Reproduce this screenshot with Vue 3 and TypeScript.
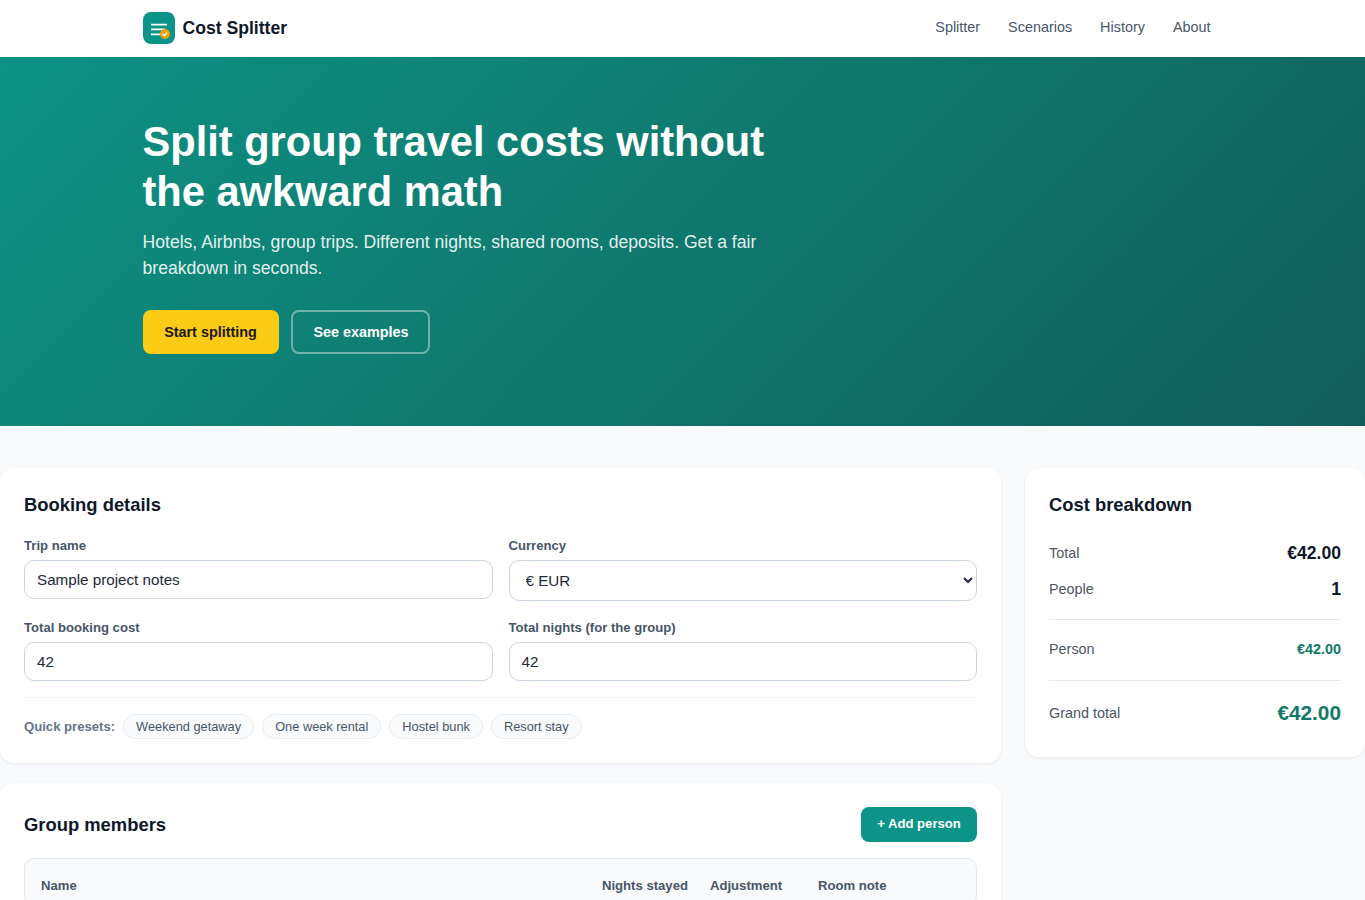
<script setup lang="ts">
import { ref } from 'vue'

const navLinks = ['Splitter', 'Scenarios', 'History', 'About']
const presets = ['Weekend getaway', 'One week rental', 'Hostel bunk', 'Resort stay']

const tripName = ref('Sample project notes')
const currency = ref('EUR')
const totalCost = ref(42)
const totalNights = ref(42)
</script>

<template>
  <div class="page">
    <header class="nav">
      <div class="nav-inner">
        <a class="brand" href="#">
          <span class="brand-logo">
            <svg viewBox="0 0 32 32" width="32" height="32" aria-hidden="true">
              <path d="M8 12.7h16M8 17.3h14M8 22.3h10" fill="none" stroke="#fff" stroke-width="1.8" />
              <circle cx="22" cy="22" r="5" fill="#f59e0b" />
              <path d="M19.8 22l1.6 1.6 2.8-3" fill="none" stroke="#fff" stroke-width="1.3" />
            </svg>
          </span>
          <span class="brand-name">Cost Splitter</span>
        </a>
        <nav class="nav-links">
          <a v-for="link in navLinks" :key="link" href="#">{{ link }}</a>
        </nav>
      </div>
    </header>

    <section class="hero">
      <div class="hero-inner">
        <h1>Split group travel costs without the awkward math</h1>
        <p>Hotels, Airbnbs, group trips. Different nights, shared rooms, deposits. Get a fair breakdown in seconds.</p>
        <div class="hero-actions">
          <button class="btn-start">Start splitting</button>
          <button class="btn-ghost">See examples</button>
        </div>
      </div>
    </section>

    <main class="layout">
      <div class="left-col">
        <section class="card">
          <h2>Booking details</h2>
          <div class="form-grid">
            <div class="field">
              <label>Trip name</label>
              <input v-model="tripName" type="text" />
            </div>
            <div class="field">
              <label>Currency</label>
              <select v-model="currency">
                <option value="EUR">€ EUR</option>
                <option value="USD">$ USD</option>
                <option value="GBP">£ GBP</option>
              </select>
            </div>
            <div class="field">
              <label>Total booking cost</label>
              <input v-model="totalCost" type="number" />
            </div>
            <div class="field">
              <label>Total nights (for the group)</label>
              <input v-model="totalNights" type="number" />
            </div>
          </div>
          <div class="presets">
            <span class="presets-label">Quick presets:</span>
            <button v-for="preset in presets" :key="preset" class="chip">{{ preset }}</button>
          </div>
        </section>

        <section class="card members">
          <div class="members-head">
            <h2>Group members</h2>
            <button class="btn-add">+ Add person</button>
          </div>
          <div class="members-table">
            <div class="members-row">
              <span>Name</span>
              <span>Nights stayed</span>
              <span>Adjustment</span>
              <span>Room note</span>
            </div>
          </div>
        </section>
      </div>

      <aside class="card summary">
        <h2>Cost breakdown</h2>
        <div class="stat-row first">
          <span>Total</span>
          <strong>€42.00</strong>
        </div>
        <div class="stat-row">
          <span>People</span>
          <strong>1</strong>
        </div>
        <div class="person-row">
          <span>Person</span>
          <strong>€42.00</strong>
        </div>
        <div class="grand-row">
          <span>Grand total</span>
          <strong>€42.00</strong>
        </div>
      </aside>
    </main>
  </div>
</template>

<style>
body {
  background: #f8fafc;
}
</style>

<style scoped>
.page {
  font-family: "Liberation Sans", Arial, sans-serif;
  color: #0f172a;
  background: #f8fafc;
}

/* Nav */
.nav {
  background: #fff;
  height: 57px;
}

.nav-inner {
  width: 1080px;
  height: 56px;
  margin: 0 auto;
  display: flex;
  align-items: center;
  justify-content: space-between;
}

.brand {
  display: flex;
  align-items: center;
  gap: 8px;
  text-decoration: none;
  color: #0f172a;
}

.brand-logo {
  width: 32px;
  height: 32px;
  border-radius: 8px;
  background: #0d9488;
  display: block;
}

.brand-logo svg {
  display: block;
}

.brand-name {
  font-size: 17.6px;
  font-weight: 700;
}

.nav-links {
  display: flex;
  gap: 4px;
  margin-bottom: 2px;
}

.nav-links a {
  padding: 8px 12px;
  font-size: 14.4px;
  color: #475569;
  text-decoration: none;
}

/* Hero */
.hero {
  height: 369px;
  background: linear-gradient(135deg, #0e9284 0%, #115e59 100%);
  color: #fff;
}

.hero-inner {
  width: 1080px;
  margin: 0 auto;
  padding-top: 60px;
}

.hero h1 {
  margin: 0 0 12px;
  max-width: 640px;
  font-size: 41.6px;
  line-height: 50px;
  font-weight: 700;
}

.hero p {
  margin: 0 0 29px;
  max-width: 640px;
  font-size: 17.6px;
  line-height: 26px;
  color: rgba(255, 255, 255, 0.9);
}

.hero-actions {
  display: flex;
  gap: 12px;
}

.hero-actions button {
  height: 44px;
  border-radius: 8px;
  font-family: inherit;
  font-size: 14.4px;
  font-weight: 700;
  cursor: pointer;
}

.btn-start {
  width: 136px;
  border: 0;
  background: #facc15;
  color: #1c1917;
}

.btn-ghost {
  width: 139px;
  padding: 0 0 0 2px;
  border: 2px solid rgba(255, 255, 255, 0.4);
  background: transparent;
  color: #fff;
}

/* Layout */
.layout {
  display: grid;
  grid-template-columns: 1fr 340px;
  gap: 24px;
  align-items: start;
  padding-top: 42px;
}

.left-col {
  display: flex;
  flex-direction: column;
  gap: 20px;
}

.card {
  background: #fff;
  border-radius: 14px;
  padding: 24px;
  box-shadow: 0 1px 3px rgba(15, 23, 42, 0.08);
}

.card h2 {
  margin: 0;
  font-size: 18.4px;
  line-height: 26px;
  font-weight: 700;
  color: #0f172a;
}

/* Booking form */
.form-grid {
  display: grid;
  grid-template-columns: 1fr 1fr;
  gap: 19px 16px;
  margin-top: 20px;
}

.field {
  display: flex;
  flex-direction: column;
  align-items: stretch;
}

.field label {
  font-size: 13.12px;
  line-height: 15px;
  font-weight: 700;
  color: #475569;
  margin-bottom: 7px;
}

.field input,
.field select {
  box-sizing: border-box;
  width: 100%;
  border: 1px solid #cbd5e1;
  border-radius: 10px;
  background: #fff;
  color: #1e293b;
  font-family: inherit;
  font-size: 15.2px;
}

.field input {
  height: 39px;
  padding: 0 12px;
  appearance: textfield;
}

.field select {
  height: 41px;
  padding: 0 12px;
}

.presets {
  display: flex;
  align-items: center;
  gap: 8px;
  margin-top: 16px;
  padding-top: 16px;
  border-top: 1px solid #f1f5f9;
}

.presets-label {
  font-size: 13.12px;
  font-weight: 700;
  color: #64748b;
}

.chip {
  height: 25px;
  padding: 0 12px;
  border: 1px solid #e8edf3;
  border-radius: 999px;
  background: #f8fafc;
  color: #475569;
  font-family: inherit;
  font-size: 12.8px;
  cursor: pointer;
}

/* Group members */
.members-head {
  display: flex;
  align-items: center;
  justify-content: space-between;
}

.btn-add {
  width: 116px;
  height: 35px;
  padding: 0 0 2px;
  border: 0;
  border-radius: 8px;
  background: #0d9488;
  color: #fff;
  font-family: inherit;
  font-size: 13.12px;
  font-weight: 700;
  cursor: pointer;
}

.members-table {
  margin-top: 16px;
  padding: 12px 16px;
  border: 1px solid #e2e8f0;
  border-radius: 10px;
  background: #f8fafc;
}

.members-row {
  display: grid;
  grid-template-columns: 1fr 100px 100px 100px 34px;
  gap: 8px;
  padding-top: 7px;
  font-size: 13.12px;
  line-height: 15px;
  font-weight: 700;
  color: #475569;
}

/* Summary */
.summary {
  padding-bottom: 12px;
}

.stat-row,
.person-row,
.grand-row {
  display: flex;
  align-items: center;
  justify-content: space-between;
  font-size: 14.4px;
  color: #4b5563;
}

.stat-row {
  height: 36px;
}

.stat-row.first {
  margin-top: 17px;
}

.stat-row strong {
  font-size: 17.6px;
  color: #0f172a;
}

.person-row {
  height: 58px;
  padding-bottom: 2px;
  margin-top: 12px;
  border-top: 1px solid #e2e8f0;
  border-bottom: 1px solid #e2e8f0;
}

.person-row strong {
  color: #0f7a66;
}

.grand-row {
  height: 64px;
}

.grand-row strong {
  font-size: 20.8px;
  color: #0f7a66;
}
</style>
